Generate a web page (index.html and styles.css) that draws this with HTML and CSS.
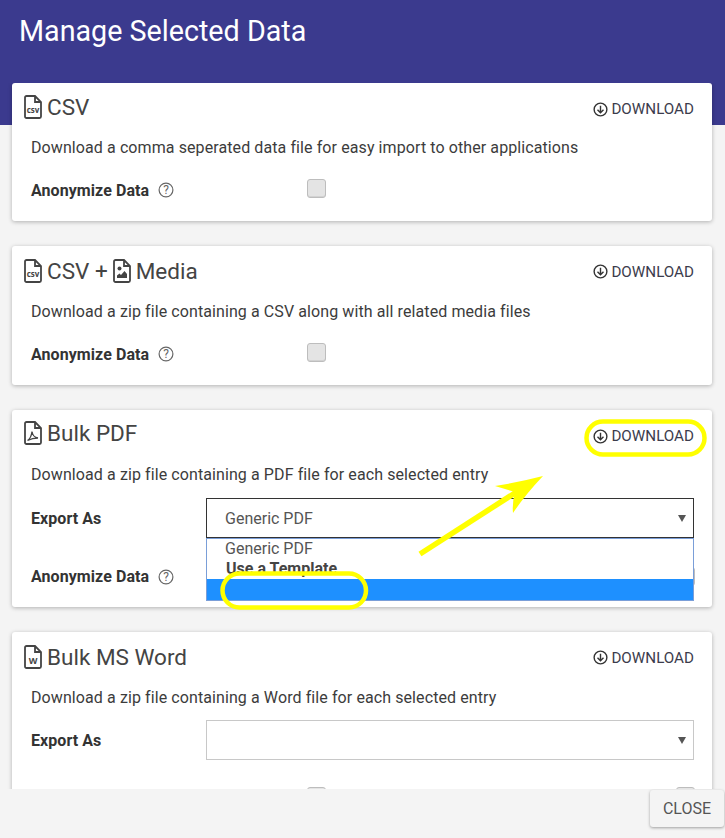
FILE: index.html
```html
<!DOCTYPE html>
<html lang="en">
<head>
<meta charset="utf-8">
<title>Manage Selected Data</title>
<link rel="stylesheet" href="styles.css">
</head>
<body>
<div class="dialog">
  <header class="band"><h1 class="title">Manage Selected Data</h1></header>
  <main class="content">
    <section class="card card-csv">
      <div class="card-head">
        <h2 class="card-title">
          <svg class="file-icon" viewBox="0 0 18 24"><path class="file-o" d="M2.500 1h8.500l6 6v14.500a1.500 1.500 0 0 1-1.500 1.500H2.500A1.500 1.500 0 0 1 1 21.500V2.500A1.500 1.500 0 0 1 2.500 1zM11 1v6h6"/><text class="file-txt" x="9" y="17.500" text-anchor="middle">csv</text></svg>
          <span>CSV</span>
        </h2>
        <button class="dl"><svg class="dl-icon" viewBox="0 0 16 16"><circle cx="8" cy="8" r="6.800"/><path d="M8 4v7.500M4.800 8.300 8 11.500l3.200-3.200"/></svg>DOWNLOAD</button>
      </div>
      <p class="desc">Download a comma seperated data file for easy import to other applications</p>
      <div class="row">
        <span class="label">Anonymize Data <svg class="help" viewBox="0 0 16 16"><circle cx="8" cy="8" r="6.900"/><text x="8" y="12" text-anchor="middle">?</text></svg></span>
        <span class="check"></span>
      </div>
    </section>

    <section class="card card-media">
      <div class="card-head">
        <h2 class="card-title">
          <svg class="file-icon" viewBox="0 0 18 24"><path class="file-o" d="M2.500 1h8.500l6 6v14.500a1.500 1.500 0 0 1-1.500 1.500H2.500A1.500 1.500 0 0 1 1 21.500V2.500A1.500 1.500 0 0 1 2.500 1zM11 1v6h6"/><text class="file-txt" x="9" y="17.500" text-anchor="middle">csv</text></svg>
          <span>CSV +</span>
          <svg class="file-icon" viewBox="0 0 18 24"><path class="file-o" d="M2.500 1h8.500l6 6v14.500a1.500 1.500 0 0 1-1.500 1.500H2.500A1.500 1.500 0 0 1 1 21.500V2.500A1.500 1.500 0 0 1 2.500 1zM11 1v6h6"/><circle class="file-fill" cx="6.500" cy="9.500" r="2"/><path class="file-fill" d="M4 19v-2.500l2.500-2 1.500 1.500 3.500-4 2.500 3V19z"/></svg>
          <span>Media</span>
        </h2>
        <button class="dl"><svg class="dl-icon" viewBox="0 0 16 16"><circle cx="8" cy="8" r="6.800"/><path d="M8 4v7.500M4.800 8.300 8 11.500l3.200-3.200"/></svg>DOWNLOAD</button>
      </div>
      <p class="desc">Download a zip file containing a CSV along with all related media files</p>
      <div class="row">
        <span class="label">Anonymize Data <svg class="help" viewBox="0 0 16 16"><circle cx="8" cy="8" r="6.900"/><text x="8" y="12" text-anchor="middle">?</text></svg></span>
        <span class="check"></span>
      </div>
    </section>

    <section class="card card-pdf">
      <div class="card-head">
        <h2 class="card-title">
          <svg class="file-icon" viewBox="0 0 18 24"><path class="file-o" d="M2.500 1h8.500l6 6v14.500a1.500 1.500 0 0 1-1.500 1.500H2.500A1.500 1.500 0 0 1 1 21.500V2.500A1.500 1.500 0 0 1 2.500 1zM11 1v6h6"/><path class="file-thin" d="M3.500 19.500c2.500-1.500 4-5 4.500-9 .5 3.500 2.500 6 6 6.500-3.500 0-7.500 1-10.500 2.500z"/></svg>
          <span>Bulk PDF</span>
        </h2>
        <button class="dl"><svg class="dl-icon" viewBox="0 0 16 16"><circle cx="8" cy="8" r="6.800"/><path d="M8 4v7.500M4.800 8.300 8 11.500l3.200-3.200"/></svg>DOWNLOAD</button>
      </div>
      <p class="desc desc-tight">Download a zip file containing a PDF file for each selected entry</p>
      <div class="row row-select">
        <span class="label">Export As</span>
        <div class="select select-open"><span>Generic PDF</span><i class="caret"></i></div>
      </div>
      <div class="row row-after">
        <span class="label">Anonymize Data <svg class="help" viewBox="0 0 16 16"><circle cx="8" cy="8" r="6.900"/><text x="8" y="12" text-anchor="middle">?</text></svg></span>
        <span class="check check-end"></span>
      </div>
      <div class="menu">
        <div class="opt">Generic PDF</div>
        <div class="opt-group">Use a Template</div>
        <div class="opt-active"></div>
      </div>
    </section>

    <section class="card card-word">
      <div class="card-head">
        <h2 class="card-title">
          <svg class="file-icon" viewBox="0 0 18 24"><path class="file-o" d="M2.500 1h8.500l6 6v14.500a1.500 1.500 0 0 1-1.500 1.500H2.500A1.500 1.500 0 0 1 1 21.500V2.500A1.500 1.500 0 0 1 2.500 1zM11 1v6h6"/><text class="file-txt file-w" x="9" y="18.500" text-anchor="middle">W</text></svg>
          <span>Bulk MS Word</span>
        </h2>
        <button class="dl"><svg class="dl-icon" viewBox="0 0 16 16"><circle cx="8" cy="8" r="6.800"/><path d="M8 4v7.500M4.800 8.300 8 11.500l3.200-3.200"/></svg>DOWNLOAD</button>
      </div>
      <p class="desc desc-tight">Download a zip file containing a Word file for each selected entry</p>
      <div class="row row-select">
        <span class="label">Export As</span>
        <div class="select"><i class="caret"></i></div>
      </div>
      <div class="row row-last">
        <span class="check"></span>
        <span class="check check-end"></span>
      </div>
    </section>
  </main>
  <footer class="foot"><button class="close">CLOSE</button></footer>
  <svg class="marks" viewBox="0 0 725 838">
    <rect class="ring" x="586.500" y="421.500" width="118" height="33" rx="16.500"/>
    <rect class="ring" x="222.500" y="573.500" width="143.500" height="34" rx="17"/>
    <path class="arrow-line" d="M420 554 518 491"/>
    <path class="arrow-head" d="M543 476Q520 482 495 486 505 489 515 492 512 503 513 513 525 495 543 476z"/>
  </svg>
</div>
</body>
</html>
```
FILE: styles.css
```css
* { box-sizing: border-box; }
html, body { margin: 0; height: 100%; }
body {
  background: #f4f4f4;
  font-family: Roboto, "Liberation Sans", sans-serif;
  color: #3c3c3c;
  overflow: hidden;
}
.dialog {
  position: relative;
  width: 725px;
  height: 838px;
  display: flex;
  flex-direction: column;
}
.band {
  flex: none;
  height: 125px;
  background: #3b3a8e;
  padding: 12px 19px 0;
}
.title {
  margin: 0;
  font-size: 28.700px;
  font-weight: 400;
  line-height: 38px;
  color: #fff;
}
.content {
  flex: none;
  height: 706px;
  margin-top: -42px;
  padding: 0 13px 0 12px;
  overflow: hidden;
  display: flex;
  flex-direction: column;
  gap: 25px;
}
.card {
  flex: none;
  position: relative;
  background: #fff;
  border-radius: 3px;
  box-shadow: 0 1px 4px rgba(0, 0, 0, .28);
  padding: 0 18px 0 19px;
}
.card-csv { height: 138px; }
.card-media { height: 139px; }
.card-pdf { height: 197px; }
.card-word { height: 220px; }
.card-head {
  display: flex;
  align-items: center;
  justify-content: space-between;
  height: 50px;
  margin-left: -7px;
}
.card-media .card-head, .card-word .card-head { height: 51px; }
.card-title {
  margin: 0;
  display: flex;
  align-items: center;
  gap: 5px;
  font-size: 22.500px;
  font-weight: 400;
  color: #444;
  position: relative;
  top: -1px;
}
.card-pdf .card-title { top: -2px; }
.file-icon { width: 18px; height: 24px; flex: none; }
.file-o { fill: none; stroke: #444; stroke-width: 1.800; }
.file-thin { fill: none; stroke: #444; stroke-width: 1.300; }
.file-fill { fill: #444; }
.file-txt { font-family: "Open Sans", sans-serif; font-size: 8px; font-weight: 700; fill: #444; }
.file-w { font-size: 9px; }
.dl {
  display: flex;
  align-items: center;
  gap: 3px;
  margin: 0;
  padding: 0;
  border: 0;
  background: none;
  font: 400 15.200px Roboto, sans-serif;
  color: #3c3c4c;
  position: relative;
  top: 1px;
}
.card-media .dl, .card-word .dl { top: 0; }
.dl-icon { width: 15px; height: 15px; fill: none; stroke: #333; stroke-width: 1.500; }
.desc {
  margin: 0;
  padding-top: 5px;
  font-size: 16px;
  letter-spacing: .093px;
  line-height: 20px;
  height: 33px;
}
.desc-tight { height: 37px; }
.card-pdf .desc-tight { height: 38px; }
.row {
  display: grid;
  grid-template-columns: 175px 1fr;
  align-items: center;
  font-size: 16px;
}
.card-csv .row, .card-media .row { height: 36px; margin-top: 6px; }
.label { font-weight: 700; letter-spacing: .07px; color: #333; display: flex; align-items: center; gap: 9px; }
.help { width: 16px; height: 16px; fill: none; stroke: #666; stroke-width: 1.200; }
.help text { font: 400 12px Roboto, sans-serif; fill: #666; stroke: none; }
.check {
  display: block;
  width: 19px;
  height: 19px;
  margin: 0 0 3px 101px;
  background: #e4e4e4;
  border: 1px solid #bdbdbd;
  border-radius: 3px;
  box-shadow: inset 0 -1px 0 #d2d2d2;
}
.row-select { height: 40px; }
.select {
  position: relative;
  height: 40px;
  padding: 0 18px;
  display: flex;
  align-items: center;
  background: #fff;
  border: 1px solid #c8c8c8;
  color: #555;
  font-size: 16px;
}
.select-open { border-color: #333; }
.caret {
  position: absolute;
  right: 7px;
  top: 16px;
  border: 4px solid transparent;
  border-top: 7px solid #555;
  border-bottom: 0;
}
.row-after { margin-top: 29px; }
.row-after .check-end { margin: 0 -1px 0 0; }
.menu {
  position: absolute;
  left: 194px;
  top: 128px;
  width: 488px;
  height: 63px;
  background: #fff;
  border: 1px solid #7a9ed8;
  overflow: hidden;
  color: #555;
  font-size: 16px;
}
.opt { height: 20px; padding-left: 18px; line-height: 20px; }
.opt-group { height: 20px; padding-left: 19px; line-height: 20px; font-size: 16px; font-weight: 700; color: #444; }
.opt-active { height: 22px; background: #1e90ff; }
.row-last { margin-top: 27px; grid-template-columns: 295px 1fr; }
.row-last .check { margin: 0; }
.row-last .check:first-child { margin-left: 276px; }
.row-last .check-end { justify-self: end; margin-right: -1px; }
.check-end { justify-self: end; }
.foot {
  flex: none;
  height: 49px;
  display: flex;
  justify-content: flex-end;
  align-items: flex-start;
  padding: 1px 1px 0 0;
}
.close {
  width: 74px;
  height: 37px;
  border: 0;
  border-radius: 3px;
  background: #f4f4f4;
  box-shadow: 0 1px 3px rgba(0, 0, 0, .35);
  font: 400 16px Roboto, sans-serif;
  color: #555;
}
.marks {
  position: absolute;
  inset: 0;
  width: 725px;
  height: 838px;
  pointer-events: none;
}
.ring { fill: none; stroke: #ffff00; stroke-width: 4.500; }
.arrow-line { fill: none; stroke: #ffff00; stroke-width: 5.500; }
.arrow-head { fill: #ffff00; }
```
